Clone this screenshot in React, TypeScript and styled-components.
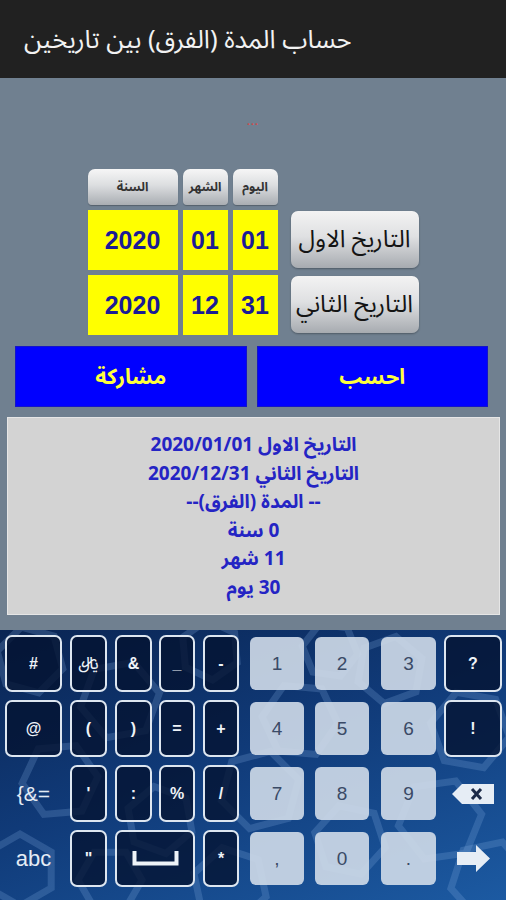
import React from "react";
import styled, { createGlobalStyle } from "styled-components";

const arabic = `"Noto Sans Arabic", "Noto Naskh Arabic", "DejaVu Sans", sans-serif`;

const Global = createGlobalStyle`
  html, body { margin: 0; padding: 0; }
  body {
    width: 506px;
    height: 900px;
    overflow: hidden;
    background: #708090;
    font-family: "Liberation Sans", Arial, sans-serif;
  }
  #root { width: 506px; height: 900px; }
`;

const Page = styled.div`
  width: 506px;
  height: 900px;
  display: flex;
  flex-direction: column;
  background: #708090;
`;

const TopBar = styled.header`
  height: 78px;
  flex: none;
  box-sizing: border-box;
  background: #212121;
  display: flex;
  align-items: center;
  padding: 2px 24px 0;
`;

const Title = styled.h1`
  margin: 0;
  font-family: ${arabic};
  font-weight: normal;
  font-size: 25.5px;
  color: #f2f2f2;
`;

const DotsRow = styled.div`
  height: 91px;
  flex: none;
  box-sizing: border-box;
  padding-top: 38px;
  display: flex;
  justify-content: center;
`;

const Dots = styled.span`
  color: #d24a4a;
  font-size: 11px;
  font-weight: bold;
  letter-spacing: 1px;
  line-height: 10px;
`;

const DateGrid = styled.div`
  display: grid;
  grid-template-columns: 90px 45px 45px 136px;
  grid-template-rows: 36px 60px 60px;
  column-gap: 5px;
  row-gap: 5px;
  justify-content: center;
`;

const HeadLabel = styled.div`
  border-radius: 7px 7px 4px 4px;
  background: linear-gradient(180deg, #f6f6f6 0%, #dcdee0 45%, #a9adb2 100%);
  box-shadow: 0 1px 1px rgba(0, 0, 0, 0.25);
  display: flex;
  align-items: center;
  justify-content: center;
  font-family: ${arabic};
  font-size: 12.5px;
  font-weight: bold;
  color: #333;
`;

const Cell = styled.div`
  background: #ffff00;
  display: flex;
  align-items: center;
  justify-content: center;
  font-family: "Liberation Sans", Arial, sans-serif;
  font-weight: bold;
  font-size: 25px;
  color: #1b1b96;
`;

const DateButton = styled.button`
  justify-self: end;
  align-self: start;
  width: 128px;
  height: 57px;
  margin-top: 1px;
  border: none;
  border-radius: 7px;
  background: linear-gradient(180deg, #f3f3f3 0%, #dfe0e2 45%, #a7abb0 100%);
  box-shadow: 0 1px 2px rgba(0, 0, 0, 0.3);
  font-family: ${arabic};
  font-size: 24px;
  color: #141414;
  padding: 0;
  white-space: nowrap;
`;

const ActionRow = styled.div`
  display: flex;
  gap: 10px;
  padding: 11px 18px 0 15px;
`;

const ActionButton = styled.button`
  flex: 1;
  height: 61px;
  border: 1px solid #1414c8;
  background: #0000ff;
  color: #ffff3c;
  font-family: ${arabic};
  font-weight: bold;
  font-size: 21.5px;
  padding: 0;
`;

const ResultBox = styled.div`
  margin: 10px 6px 0 7px;
  height: 198px;
  box-sizing: border-box;
  background: #d3d3d3;
  border: 1px solid #e6e6e6;
  padding-top: 13px;
  text-align: center;
  color: #2424c4;
  font-family: ${arabic};
  font-weight: bold;
  font-size: 19px;
  line-height: 28.6px;
`;

const ResultLine = styled.div`
  height: 28.6px;
`;

const Keyboard = styled.div`
  position: relative;
  margin-top: 15px;
  flex: 1;
  overflow: hidden;
  background: linear-gradient(160deg, #0a2553 0%, #103a78 45%, #1c5aa2 100%);
  padding: 5px 4px 0 5px;
  box-sizing: border-box;
`;

const Pattern = styled.svg`
  position: absolute;
  left: 0;
  top: 0;
  width: 506px;
  height: 270px;
  pointer-events: none;
`;

const KeyGrid = styled.div`
  position: relative;
  display: grid;
  grid-template-columns: 65px 45px 44px 44px 47px 65px 66px 63px 58px;
  grid-template-rows: 57px 57px 57px 57px;
  row-gap: 8px;
`;

const DarkKey = styled.div<{ $w: number; $span?: number }>`
  width: ${(p) => p.$w}px;
  grid-column: span ${(p) => p.$span ?? 1};
  box-sizing: border-box;
  border: 2px solid #dde6f0;
  border-radius: 7px;
  background: rgba(4, 18, 48, 0.78);
  display: flex;
  align-items: center;
  justify-content: center;
  color: #eef3f8;
  font-family: "Liberation Sans", Arial, sans-serif;
  font-weight: bold;
  font-size: 16px;
`;

const LightKey = styled.div<{ $w: number }>`
  width: ${(p) => p.$w}px;
  margin: 2px 0;
  border-radius: 6px;
  background: rgba(208, 219, 233, 0.9);
  display: flex;
  align-items: center;
  justify-content: center;
  color: #3a4a66;
  font-family: "Liberation Sans", Arial, sans-serif;
  font-size: 19px;
`;

const PlainKey = styled.div<{ $size: number }>`
  width: 57px;
  display: flex;
  align-items: center;
  justify-content: center;
  color: #e4ecf5;
  font-family: "Liberation Sans", Arial, sans-serif;
  font-size: ${(p) => p.$size}px;
`;

const IconKey = styled.div`
  width: 58px;
  display: flex;
  align-items: center;
  justify-content: center;
`;

const RialGlyph = styled.span`
  font-family: ${arabic};
  font-size: 17px;
  font-weight: normal;
`;

const hexes: [number, number, number, number][] = [
  [30, 30, 34, 15], [120, 70, 40, -10], [210, 20, 30, 25], [300, 90, 38, 5],
  [390, 40, 34, -20], [470, 100, 40, 10], [60, 150, 38, -5], [160, 190, 34, 20],
  [260, 160, 40, -15], [350, 210, 36, 12], [440, 190, 42, -8], [20, 240, 36, 30],
  [110, 250, 32, 0], [230, 255, 38, 18], [490, 250, 40, -12], [330, 20, 28, 8],
];

function hexPath(cx: number, cy: number, r: number, rot: number) {
  const pts: string[] = [];
  for (let i = 0; i < 6; i++) {
    const a = ((60 * i + rot) * Math.PI) / 180;
    pts.push(`${(cx + r * Math.cos(a)).toFixed(1)},${(cy + r * Math.sin(a)).toFixed(1)}`);
  }
  return pts.join(" ");
}

export default function App() {
  return (
    <Page>
      <Global />
      <TopBar>
        <Title dir="rtl">حساب المدة (الفرق) بين تاريخين</Title>
      </TopBar>
      <DotsRow>
        <Dots>...</Dots>
      </DotsRow>
      <DateGrid>
        <HeadLabel>السنة</HeadLabel>
        <HeadLabel>الشهر</HeadLabel>
        <HeadLabel>اليوم</HeadLabel>
        <div />
        <Cell>2020</Cell>
        <Cell>01</Cell>
        <Cell>01</Cell>
        <DateButton dir="rtl">التاريخ الاول</DateButton>
        <Cell>2020</Cell>
        <Cell>12</Cell>
        <Cell>31</Cell>
        <DateButton dir="rtl">التاريخ الثاني</DateButton>
      </DateGrid>
      <ActionRow>
        <ActionButton>مشاركة</ActionButton>
        <ActionButton>احسب</ActionButton>
      </ActionRow>
      <ResultBox>
        <ResultLine dir="rtl">التاريخ الاول 2020/01/01</ResultLine>
        <ResultLine dir="rtl">التاريخ الثاني 2020/12/31</ResultLine>
        <ResultLine dir="rtl">-- المدة (الفرق)--</ResultLine>
        <ResultLine dir="rtl">0 سنة</ResultLine>
        <ResultLine dir="rtl">11 شهر</ResultLine>
        <ResultLine dir="rtl">30 يوم</ResultLine>
      </ResultBox>
      <Keyboard>
        <Pattern viewBox="0 0 506 270">
          {hexes.map(([x, y, r, rot], i) => (
            <polygon
              key={i}
              points={hexPath(x, y, r, rot)}
              fill="none"
              stroke="rgba(140,180,230,0.22)"
              strokeWidth={7}
            />
          ))}
        </Pattern>
        <KeyGrid>
          <DarkKey $w={57}>#</DarkKey>
          <DarkKey $w={37}><RialGlyph>﷼</RialGlyph></DarkKey>
          <DarkKey $w={37}>&amp;</DarkKey>
          <DarkKey $w={36}>_</DarkKey>
          <DarkKey $w={36}>-</DarkKey>
          <LightKey $w={54}>1</LightKey>
          <LightKey $w={54}>2</LightKey>
          <LightKey $w={55}>3</LightKey>
          <DarkKey $w={58}>?</DarkKey>

          <DarkKey $w={57}>@</DarkKey>
          <DarkKey $w={37}>(</DarkKey>
          <DarkKey $w={37}>)</DarkKey>
          <DarkKey $w={36}>=</DarkKey>
          <DarkKey $w={36}>+</DarkKey>
          <LightKey $w={54}>4</LightKey>
          <LightKey $w={54}>5</LightKey>
          <LightKey $w={55}>6</LightKey>
          <DarkKey $w={58}>!</DarkKey>

          <PlainKey $size={21}>{"{&="}</PlainKey>
          <DarkKey $w={37}>'</DarkKey>
          <DarkKey $w={37}>:</DarkKey>
          <DarkKey $w={36}>%</DarkKey>
          <DarkKey $w={36}>/</DarkKey>
          <LightKey $w={54}>7</LightKey>
          <LightKey $w={54}>8</LightKey>
          <LightKey $w={55}>9</LightKey>
          <IconKey>
            <svg width="42" height="20" viewBox="0 0 42 20">
              <polygon points="0,10 10,0 42,0 42,20 10,20" fill="#e6edf5" />
              <path d="M20 5 L29 15 M29 5 L20 15" stroke="#1b2a48" strokeWidth="3" />
            </svg>
          </IconKey>

          <PlainKey $size={22}>abc</PlainKey>
          <DarkKey $w={37}>"</DarkKey>
          <DarkKey $w={80} $span={2}>
            <svg width="47" height="15" viewBox="0 0 47 15">
              <path d="M2.5 0 V12.5 H44.5 V0" fill="none" stroke="#eef3f8" strokeWidth="4" />
            </svg>
          </DarkKey>
          <DarkKey $w={36}>*</DarkKey>
          <LightKey $w={54}>,</LightKey>
          <LightKey $w={54}>0</LightKey>
          <LightKey $w={55}>.</LightKey>
          <IconKey>
            <svg width="33" height="27" viewBox="0 0 33 27">
              <polygon points="0,7 19,7 19,0 33,13.5 19,27 19,20 0,20" fill="#e6edf5" />
            </svg>
          </IconKey>
        </KeyGrid>
      </Keyboard>
    </Page>
  );
}
